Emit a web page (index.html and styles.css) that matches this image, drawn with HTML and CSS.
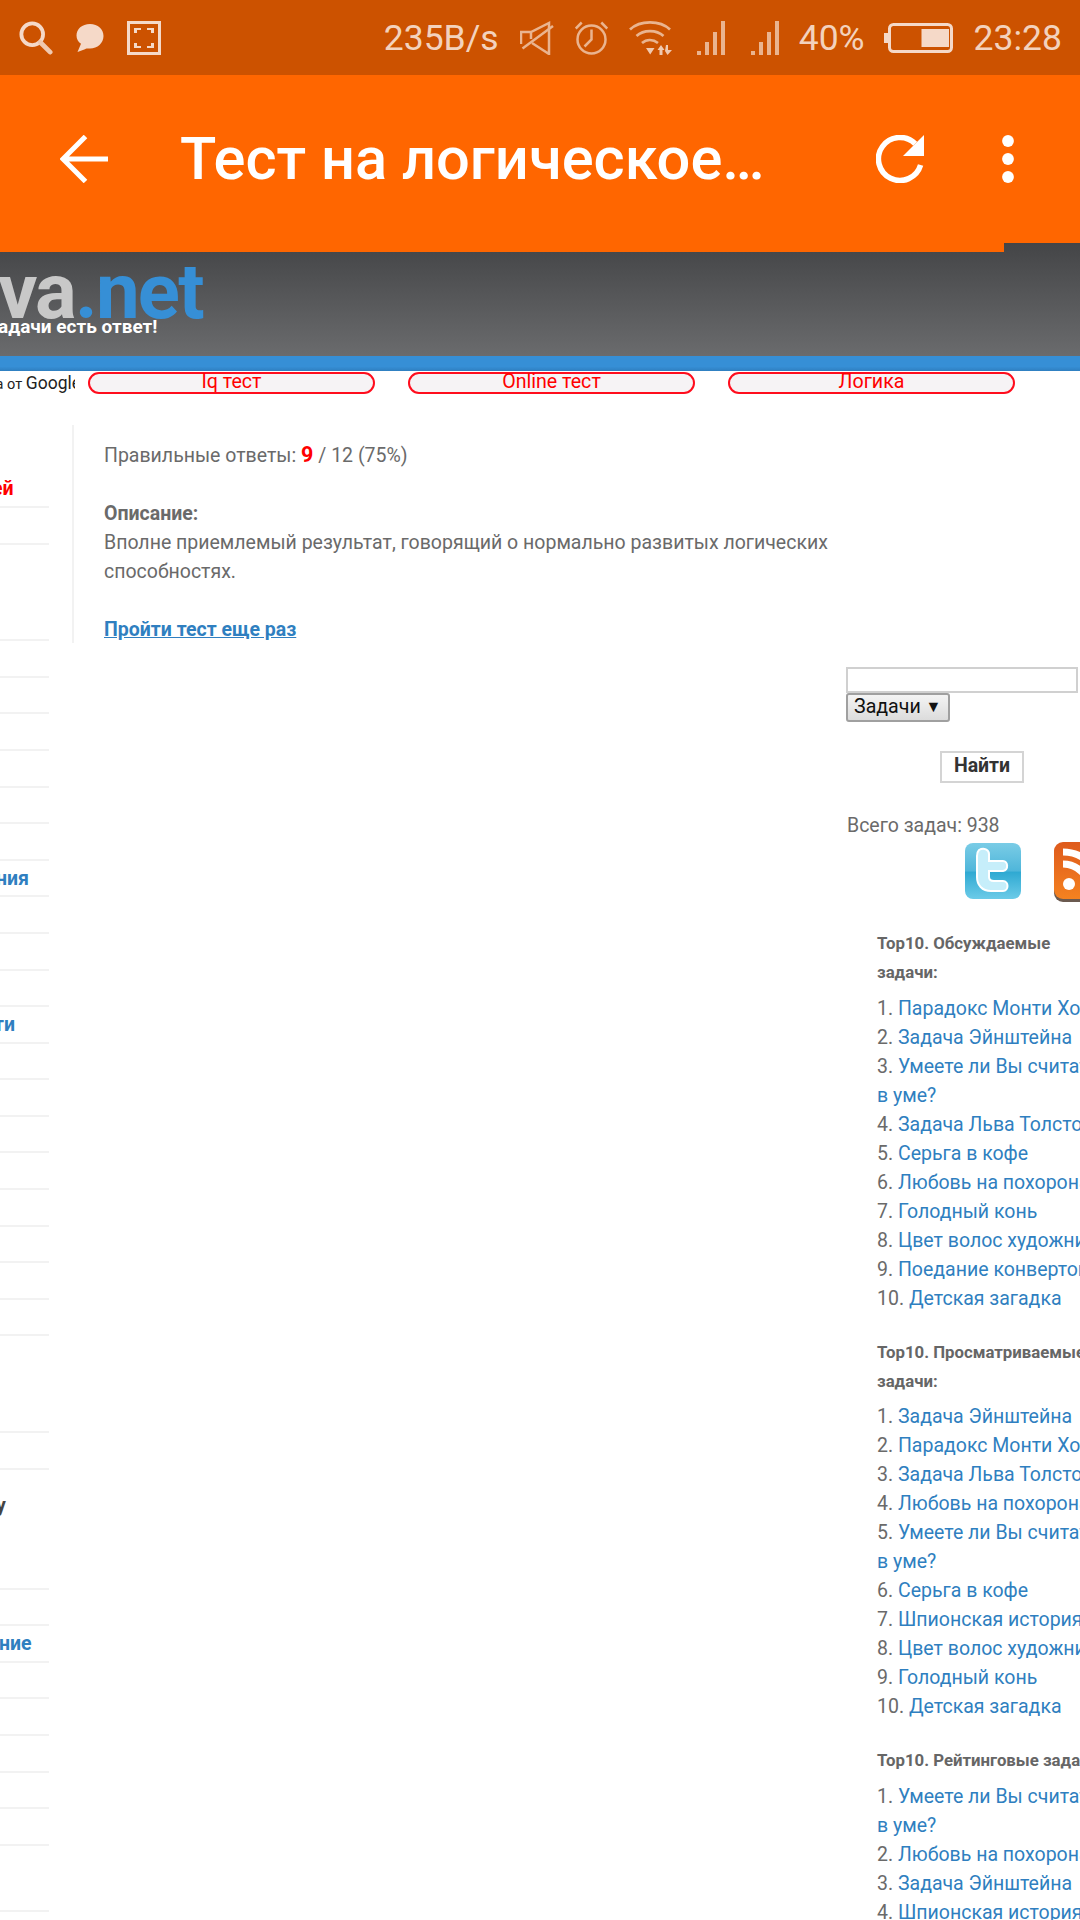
FILE: index.html
```html
<!DOCTYPE html>
<html lang="ru">
<head>
<meta charset="utf-8">
<title>Тест на логическое мышление</title>
<link rel="stylesheet" href="styles.css">
</head>
<body>
<header class="statusbar">
  <div class="status-left">
    <svg class="ic-search" width="34" height="34" viewBox="0 0 36 36"><circle cx="14" cy="14" r="11.5" fill="none" stroke="#f5d9c8" stroke-width="4"/><path d="M22.5 22.5L33 33" stroke="#f0c9b0" stroke-width="5" stroke-linecap="round"/></svg>
    <svg class="ic-bubble" width="28" height="28" viewBox="0 0 28 28"><path d="M14 0C6 0 .5 5 .5 11.500c0 3.500 1.700 6.300 4.500 8.300L1.500 28l7.500-2.800c1.500-.8 2.500-.7 5-.7 7.500 0 13.500-5.500 13.500-12.500S22 0 14 0z" fill="#f5d9c8"/></svg>
    <svg class="ic-frame" width="34" height="34" viewBox="0 0 34 34"><rect x="1.500" y="1.500" width="31" height="31" fill="none" stroke="#f5d9c8" stroke-width="3"/><path d="M7 12V7h7v2h-4v3zM20 7h7v5h-3V9h-4zM7 22h3v3h4v2H7zM24 22h3v5h-7v-2h4z" fill="#f5d9c8"/></svg>
  </div>
  <div class="status-right">
    <span class="status-text speed">235B/s</span>
    <svg class="ic-mute" width="34" height="34" viewBox="0 0 34 34"><path d="M1 23V11h10L29 2v31L12 22M11 11v7" fill="none" stroke="#eab48f" stroke-width="2.500"/><path d="M2.500 27.500L33 5" stroke="#eab48f" stroke-width="2.500"/></svg>
    <svg class="ic-alarm" width="33" height="34" viewBox="0 0 33 34"><circle cx="16.500" cy="18.500" r="14" fill="none" stroke="#eab48f" stroke-width="2.500"/><path d="M16.500 8.500V18.500l-7 7M.7 7.500l6-6M32.300 7.500l-6-6" fill="none" stroke="#eab48f" stroke-width="2.500"/></svg>
    <svg class="ic-wifi" width="43" height="34" viewBox="0 0 43 34"><path d="M1 8.500C11 -1 31 -1 41 8.500M7.500 15c7-6.500 20-6.500 27 0M13 22c4.500-4 11-4 16 0" fill="none" stroke="#eab48f" stroke-width="2.700"/><path d="M17 27h8.500l-4.300 6.500zM32 24l3.500 5h-2v5h-3v-5h-2zM37 24h2v5h4l-4.500 5-2.500-4z" fill="#f0c9b0"/></svg>
    <svg class="ic-signal" width="28" height="34" viewBox="0 0 28 34"><path d="M0 30h4v4H0zM8 21h4v13H8zM16 11h4v23h-4zM24 0h4v34h-4z" fill="#eab48f"/></svg>
    <svg class="ic-signal ic-signal-last" width="28" height="34" viewBox="0 0 28 34"><path d="M0 30h4v4H0zM8 21h4v13H8zM16 11h4v23h-4zM24 0h4v34h-4z" fill="#eab48f"/></svg>
    <span class="status-text pct">40%</span>
    <svg class="ic-batt" width="69" height="30" viewBox="0 0 69 30"><rect x="5.500" y="1.500" width="62" height="27" rx="4" fill="none" stroke="#f5d9c8" stroke-width="3"/><rect x="0" y="10" width="4" height="10" fill="#f5d9c8"/><rect x="37.500" y="6" width="27.500" height="18" fill="#f5d9c8"/></svg>
    <span class="status-text">23:28</span>
  </div>
</header>

<nav class="toolbar">
  <svg class="ic-back" width="48" height="48" viewBox="0 0 48 48"><path d="M48 24H4M25.500 1.500L3 24l22.500 22.500" fill="none" stroke="#fff" stroke-width="5"/></svg>
  <h1 class="title">Тест на логическое…</h1>
  <svg class="ic-reload" width="48" height="48" viewBox="0 0 48 48"><path d="M39.200 8.800A21.500 21.500 0 1 0 44.600 30" fill="none" stroke="#fff" stroke-width="5.500"/><path d="M48 0v21H27z" fill="#fff"/></svg>
  <svg class="ic-more" width="12" height="48" viewBox="0 0 12 48"><circle cx="6" cy="6" r="5.900" fill="#fff"/><circle cx="6" cy="24" r="5.900" fill="#fff"/><circle cx="6" cy="42" r="5.900" fill="#fff"/></svg>
</nav>

<section class="banner">
  <div class="logo"><span class="logo-grey">va</span><span class="logo-blue">.net</span></div>
  <div class="slogan">адачи есть ответ!</div>
</section>
<div class="band"></div>

<div class="tabs">
  <div class="gclip"><span class="gtext">а от <span class="gword">Google</span></span></div>
  <a class="tab">Iq тест</a>
  <a class="tab">Online тест</a>
  <a class="tab">Логика</a>
</div>

<main class="main">
  <ul class="side">
    <li class="row strong red cut-8">ей</li>
    <li class="row"></li>
    <li class="row row-96"></li>
    <li class="row"></li>
    <li class="row"></li>
    <li class="row"></li>
    <li class="row"></li>
    <li class="row"></li>
    <li class="row"></li>
    <li class="row strong blue cut-4">ния</li>
    <li class="row"></li>
    <li class="row"></li>
    <li class="row"></li>
    <li class="row strong blue cut-6">ти</li>
    <li class="row"></li>
    <li class="row"></li>
    <li class="row"></li>
    <li class="row"></li>
    <li class="row"></li>
    <li class="row"></li>
    <li class="row"></li>
    <li class="row"></li>
    <li class="row row-96"></li>
    <li class="row"></li>
    <li class="row row-120 strong dark cut-4">у</li>
    <li class="row"></li>
    <li class="row strong blue cut-1">ние</li>
    <li class="row"></li>
    <li class="row"></li>
    <li class="row"></li>
    <li class="row"></li>
    <li class="row"></li>
    <li class="row row-66"></li>
    <li class="row"></li>
  </ul>

  <article class="result">
    <p class="para">Правильные ответы: <b class="score">9</b> / 12 (75%)</p>
    <p class="para"><b>Описание:</b><br>Вполне приемлемый результат, говорящий о нормально развитых логических способностях.</p>
    <p class="para"><a class="retry">Пройти тест еще раз</a></p>
  </article>

  <aside class="aside">
    <div class="search">
      <div class="field"></div>
      <div class="select">Задачи <span class="caret">▼</span></div>
      <div class="btn-wrap"><div class="btn">Найти</div></div>
    </div>
    <p class="total">Всего задач: 938</p>
    <div class="social">
      <svg class="ic-tw" width="58" height="58" viewBox="0 0 58 58">
        <defs><linearGradient id="tw" x1="0" y1="0" x2="0" y2="1"><stop offset="0" stop-color="#7accE6"/><stop offset=".5" stop-color="#4fb6da"/><stop offset=".52" stop-color="#2fa9d2"/><stop offset="1" stop-color="#6ccbe8"/></linearGradient></defs>
        <rect x="1" y="1" width="56" height="56" rx="8" fill="url(#tw)"/>
        <path d="M15 8c5-3 10 0 10 4v7h14c5 0 6 9 0 10H25v6c0 3 2 4 5 4h9c6 0 6 10 0 10H27c-9 0-14-6-14-14V14c0-2 0-4 2-6z" fill="#c6eefa" stroke="#fff" stroke-width="2"/>
      </svg>
      <svg class="ic-rss" width="58" height="60" viewBox="0 0 58 60">
        <defs><linearGradient id="rs" x1="0" y1="0" x2="0" y2="1"><stop offset="0" stop-color="#de5a1c"/><stop offset="1" stop-color="#f58220"/></linearGradient></defs>
        <rect x="0" y="2" width="58" height="58" rx="9" fill="#6b5a50"/>
        <rect x="0" y="0" width="58" height="57" rx="9" fill="url(#rs)"/>
        <circle cx="15" cy="42" r="6" fill="#fff"/>
        <path d="M9 22a26 26 0 0 1 26 26M9 10a38 38 0 0 1 38 38" fill="none" stroke="#fff" stroke-width="7"/>
      </svg>
    </div>

    <section class="top">
      <h3 class="top-title">Top10. Обсуждаемые<br>задачи:</h3>
      <ol class="top-list">
        <li>1. <a>Парадокс Монти Холла</a></li>
        <li>2. <a>Задача Эйнштейна</a></li>
        <li>3. <a>Умеете ли Вы считать<br>в уме?</a></li>
        <li>4. <a>Задача Льва Толстого</a></li>
        <li>5. <a>Серьга в кофе</a></li>
        <li>6. <a>Любовь на похоронах</a></li>
        <li>7. <a>Голодный конь</a></li>
        <li>8. <a>Цвет волос художника</a></li>
        <li>9. <a>Поедание конвертов</a></li>
        <li>10. <a>Детская загадка</a></li>
      </ol>
    </section>
    <section class="top">
      <h3 class="top-title">Top10. Просматриваемые<br>задачи:</h3>
      <ol class="top-list">
        <li>1. <a>Задача Эйнштейна</a></li>
        <li>2. <a>Парадокс Монти Холла</a></li>
        <li>3. <a>Задача Льва Толстого</a></li>
        <li>4. <a>Любовь на похоронах</a></li>
        <li>5. <a>Умеете ли Вы считать<br>в уме?</a></li>
        <li>6. <a>Серьга в кофе</a></li>
        <li>7. <a>Шпионская история</a></li>
        <li>8. <a>Цвет волос художника</a></li>
        <li>9. <a>Голодный конь</a></li>
        <li>10. <a>Детская загадка</a></li>
      </ol>
    </section>
    <section class="top">
      <h3 class="top-title">Top10. Рейтинговые задачи:</h3>
      <ol class="top-list">
        <li>1. <a>Умеете ли Вы считать<br>в уме?</a></li>
        <li>2. <a>Любовь на похоронах</a></li>
        <li>3. <a>Задача Эйнштейна</a></li>
        <li>4. <a>Шпионская история</a></li>
      </ol>
    </section>
  </aside>
</main>
</body>
</html>
```

FILE: styles.css
```css
* { box-sizing: border-box; }
html, body { margin: 0; padding: 0; width: 1080px; height: 1920px; overflow: hidden; background: #fff; }
body { font-family: Roboto, "Noto Sans", sans-serif; font-size: 19.5px; line-height: 29px; color: #6a6a6a; }

.statusbar { height: 75px; background: #cc5200; display: flex; justify-content: space-between; align-items: center; }
.status-left { display: flex; align-items: center; padding-left: 19px; }
.status-right { display: flex; align-items: center; padding-right: 18px; }
.status-text { font-size: 35.500px; line-height: 40px; color: #f3d2bd; font-weight: 400; white-space: nowrap; }
.ic-search { margin-right: 23px; }
.ic-bubble { margin-right: 23px; }
.speed { margin-right: 21px; }
.ic-mute { margin-right: 21px; }
.ic-alarm { margin-right: 21px; }
.ic-wifi { margin-right: 25px; }
.ic-signal { margin-right: 26px; }
.ic-signal-last { margin-right: 20px; }
.pct { margin-right: 19px; }
.ic-batt { margin-right: 21px; }

.toolbar { position: relative; z-index: 2; height: 168px; background: #ff6600; display: flex; align-items: center; padding-left: 60px; }
.toolbar::after { content: ""; position: absolute; left: 0; top: 168px; width: 1004px; height: 9px; background: #ff6600; }
.ic-back { flex: none; }
.title { flex: none; width: 696px; margin: 0 0 0 72px; font-size: 59.600px; font-weight: 500; line-height: 70px; color: #fff; white-space: nowrap; }
.ic-reload { flex: none; }
.ic-more { flex: none; margin-left: 78px; }

.banner { height: 113px; background: linear-gradient(#444547, #6a6b6d); overflow: hidden; padding-top: 9px; }
.logo { font-size: 78px; line-height: 80px; font-weight: 700; letter-spacing: -1.800px; white-space: nowrap; margin-left: -2px; }
.logo-grey { color: #c8c8c8; }
.logo-blue { color: #368fd6; }
.slogan { margin-top: -16px; font-size: 19px; line-height: 22px; font-weight: 700; color: #fff; white-space: nowrap; text-indent: -2px; }
.band { height: 15px; background: linear-gradient(#368fd6 70%, #2f7fc0); }

.tabs { display: flex; align-items: flex-start; height: 54px; padding-top: 1px; }
.gclip { flex: none; width: 75px; height: 30px; overflow: hidden; margin-right: 13px; display: flex; justify-content: flex-end; color: #222; }
.gtext { flex: none; font-size: 14.500px; line-height: 22px; white-space: nowrap; margin-right: -6px; }
.gword { font-size: 17.500px; }
.tab { flex: none; width: 287px; height: 22px; margin-right: 33px; border: 2px solid #ff0d1d; border-radius: 11px; background: #f6f3f5; color: #f00; text-align: center; font-size: 19.600px; line-height: 16px; }

.main { display: flex; align-items: flex-start; }
.side { flex: none; width: 49px; margin: 46.400px 0 0; padding: 0; list-style: none; }
.row { height: 36.600px; border-bottom: 2px solid #f2f2f2; white-space: nowrap; line-height: 36px; overflow: hidden; }
.row-96 { height: 96.600px; }
.row-120 { height: 120px; padding-top: 18px; }
.row-66 { height: 66px; }
.strong { font-weight: 700; font-size: 19.500px; }
.cut-8 { text-indent: -8px; }
.cut-6 { text-indent: -6px; }
.cut-4 { text-indent: -4px; }
.cut-1 { text-indent: -1px; }
.red { color: #f00; }
.blue { color: #2f7fc0; }
.dark { color: #444; }

.result { flex: none; width: 774px; height: 218px; margin-left: 23px; padding: 15px 0 0 30px; border-left: 2px solid #f2f2f2; }
.para { margin: 0 0 29px; }
.score { color: #f00; font-size: 21.500px; }
.retry { color: #2f7fc0; font-weight: 700; text-decoration: underline; }

.aside { flex: none; width: 300px; margin-top: 242px; }
.field { width: 232px; height: 26px; border: 2px solid #d0d0d0; background: #fff; }
.select { width: 104px; height: 29px; border: 2px solid #a0a0a0; border-radius: 3px; background: linear-gradient(#f4f4f4, #dcdcdc); color: #111; font-size: 19.600px; line-height: 23px; padding-left: 6px; white-space: nowrap; }
.caret { font-size: 16px; vertical-align: 1px; }
.btn-wrap { display: flex; padding: 29px 0 0 94px; }
.btn { width: 84px; height: 32px; border: 2px solid #d4d4d4; background: #fff; color: #333; font-weight: 700; text-align: center; line-height: 26px; }
.total { margin: 28px 0 0 1px; line-height: 29px; }
.social { display: flex; align-items: flex-start; padding: 2px 0 0 118px; gap: 32px; height: 89px; }
.top { padding-left: 31px; margin-bottom: 25px; white-space: nowrap; }
.top-title { margin: 0 0 6.500px; font-size: 16.800px; line-height: 29px; font-weight: 700; color: #666; }
.top-list { margin: 0; padding: 0; list-style: none; line-height: 29px; }
.top-list a { color: #2f7fc0; }
```
